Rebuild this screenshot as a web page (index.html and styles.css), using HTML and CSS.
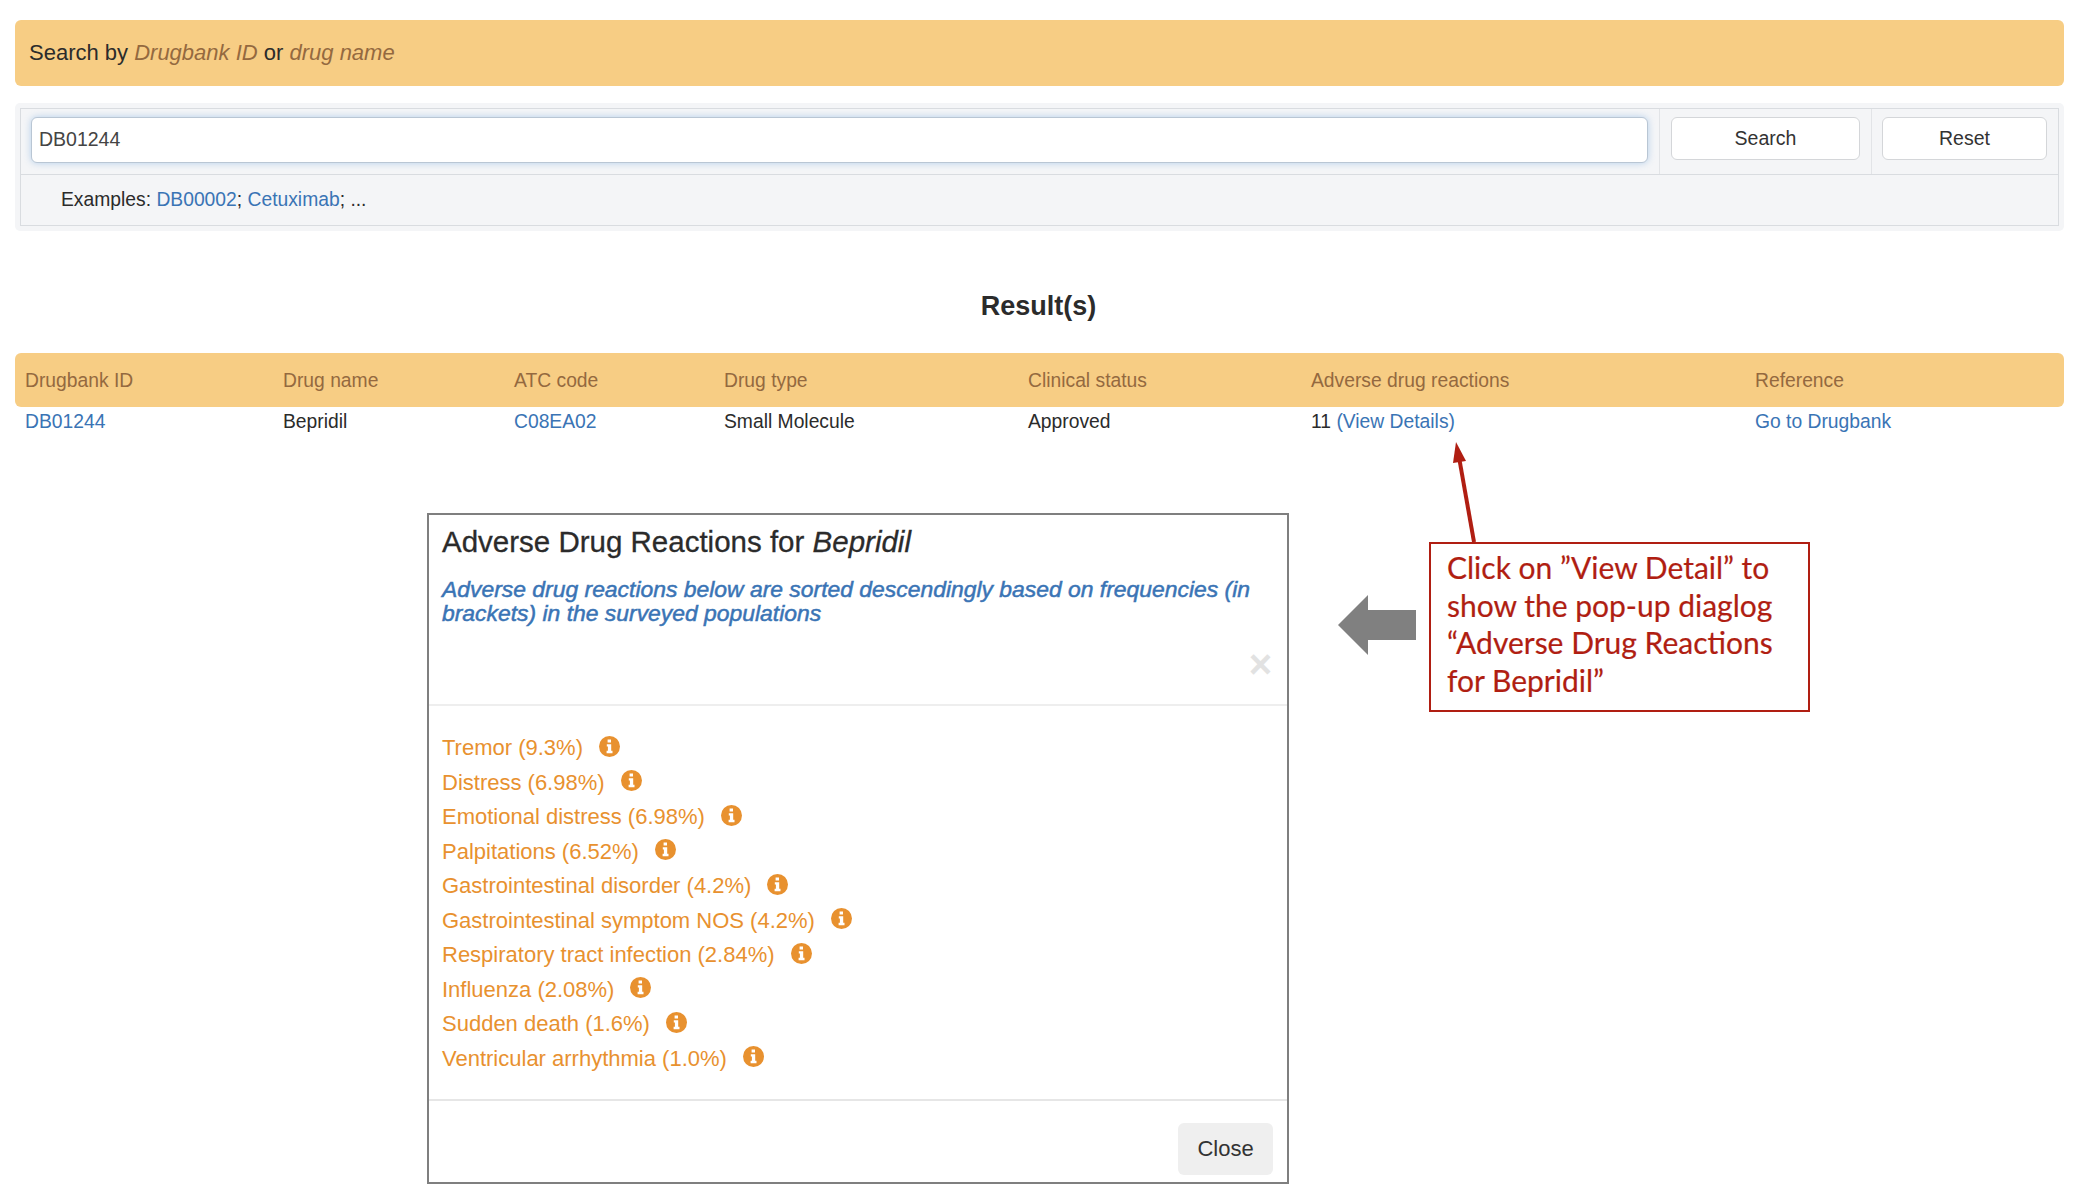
FILE: index.html
```html
<!DOCTYPE html>
<html lang="en">

<head>
  <meta charset="UTF-8" />
  <title>Drug search</title>
  <link rel="stylesheet" href="styles.css">
</head>

<body>

  <!-- Search -->
  <div class="banner">Search by <em>Drugbank ID</em> or <em>drug name</em></div>

  <div class="search-panel">
    <div class="search-inner">
      <div class="search-row">
        <div class="cell cell-input"><input class="search-input" type="text" value="DB01244" /></div>
        <div class="cell cell-search"><button class="btn btn-search">Search</button></div>
        <div class="cell cell-reset"><button class="btn btn-reset">Reset</button></div>
      </div>
      <div class="examples">Examples: <a href="#">DB00002</a>; <a href="#">Cetuximab</a>; ...</div>
    </div>
  </div>

  <h2 class="result-title">Result(s)</h2>

  <!-- Result table -->
  <table class="result-table">
    <thead>
      <tr>
        <th class="col-id">Drugbank ID</th>
        <th class="col-name">Drug name</th>
        <th class="col-atc">ATC code</th>
        <th class="col-type">Drug type</th>
        <th class="col-status">Clinical status</th>
        <th class="col-adr">Adverse drug reactions</th>
        <th>Reference</th>
      </tr>
    </thead>
    <tbody>
      <tr>
        <td><a href="#">DB01244</a></td>
        <td>Bepridil</td>
        <td><a href="#">C08EA02</a></td>
        <td>Small Molecule</td>
        <td>Approved</td>
        <td>11 <a href="#">(View Details)</a></td>
        <td><a href="#">Go to Drugbank</a></td>
      </tr>
    </tbody>
  </table>

  <div class="demo">

    <!-- Modal -->
    <div class="modal">
      <div class="modal-header">
        <h3>Adverse Drug Reactions for <em>Bepridil</em></h3>
        <p class="modal-note">Adverse drug reactions below are sorted descendingly based on frequencies (in brackets) in the surveyed populations</p>
        <span class="modal-x">×</span>
      </div>
      <ul class="adr-list" id="adrList"></ul>
      <div class="modal-footer"><button class="btn-close">Close</button></div>
    </div>

    <svg class="grey-arrow" width="78" height="60" viewBox="0 0 78 60">
      <path d="M0 30 L30 0 V15 H78 V45 H30 V60 Z" fill="#808080" />
    </svg>

    <div class="callout">
      <svg class="red-arrow" width="40" height="100" viewBox="0 0 40 100">
        <path d="M33 100 L18.5 18" stroke="#b01e12" stroke-width="4" fill="none" />
        <path d="M15 0 L25 19 L12 21 Z" fill="#b01e12" />
      </svg>
      Click on ”View Detail” to show the pop-up diaglog “Adverse Drug Reactions for Bepridil”
    </div>
  </div>

  <script>
    const reactions = [
      'Tremor (9.3%)',
      'Distress (6.98%)',
      'Emotional distress (6.98%)',
      'Palpitations (6.52%)',
      'Gastrointestinal disorder (4.2%)',
      'Gastrointestinal symptom NOS (4.2%)',
      'Respiratory tract infection (2.84%)',
      'Influenza (2.08%)',
      'Sudden death (1.6%)',
      'Ventricular arrhythmia (1.0%)'
    ];

    const infoIcon = `
      <svg class="info-icon" width="21" height="21" viewBox="0 0 21 21">
        <circle cx="10.5" cy="10.5" r="10.5" fill="#e8912f" />
        <path d="M8.6 3.6h3.4v3h-3.4z M7.8 8.2h4.4v6.6h1.3v2.4H7.6v-2.4h1.3v-4.2H7.8z" fill="#fff" />
      </svg>`;

    const list = document.getElementById('adrList');
    reactions.forEach(item => {
      const li = document.createElement('li');
      li.innerHTML = `<span>${item}</span>${infoIcon}`;
      list.appendChild(li);
    });
  </script>

</body>

</html>
```

FILE: styles.css
```css
html, body {
  margin: 0;
  padding: 0;
}

body {
  font-family: "Liberation Sans", Arial, sans-serif;
  font-size: 19.5px;
  color: #2b2b2b;
  background: #fff;
  padding: 20px 18px 0 15px;
}

a {
  color: #3a74b5;
  text-decoration: none;
}

.banner {
  height: 66px;
  line-height: 66px;
  padding-left: 14px;
  background: #f7cd84;
  border-radius: 6px;
  font-size: 22px;
}

.banner em {
  color: #94693f;
}

.search-panel {
  margin-top: 17px;
  padding: 5px;
  background: #f4f5f7;
  border-radius: 5px;
}

.search-inner {
  border: 1px solid #d9dce0;
  background: #f4f5f7;
}

.search-row {
  display: flex;
  height: 65px;
  border-bottom: 1px solid #d9dce0;
}

.cell {
  box-sizing: border-box;
  padding-top: 8px;
}

.cell-input {
  flex: 1;
  padding-left: 10px;
  padding-right: 11px;
  border-right: 1px solid #e2e4e7;
}

.cell-search {
  width: 212px;
  padding-left: 11px;
  border-right: 1px solid #e2e4e7;
}

.cell-reset {
  width: 186px;
  padding-left: 10px;
}

.search-input {
  box-sizing: border-box;
  display: block;
  width: 100%;
  height: 46px;
  padding: 0 7px 2px;
  font-family: inherit;
  font-size: 19.5px;
  color: #444;
  background: #fff;
  border: 1px solid #b9c6d4;
  border-radius: 6px;
  box-shadow: 0 0 7px rgba(102, 160, 220, 0.45);
  outline: none;
}

.btn {
  box-sizing: border-box;
  height: 43px;
  font-family: inherit;
  font-size: 19.5px;
  color: #333;
  background: #fff;
  border: 1px solid #d4d6d9;
  border-radius: 6px;
}

.btn-search {
  width: 189px;
}

.btn-reset {
  width: 165px;
}

.examples {
  height: 50px;
  line-height: 50px;
  padding-left: 40px;
  box-sizing: border-box;
  font-size: 19.3px;
}

.result-title {
  margin: 56px 0 0;
  height: 66px;
  font-size: 27px;
  line-height: 38px;
  text-align: center;
  padding-right: 2px;
}

.result-table {
  width: 100%;
  border-collapse: collapse;
  table-layout: fixed;
  font-size: 19.3px;
}

.result-table th {
  box-sizing: border-box;
  height: 54px;
  padding: 2px 0 0 10px;
  background: #f7cd84;
  color: #94693f;
  font-weight: normal;
  text-align: left;
}

.result-table th:first-child {
  border-radius: 6px 0 0 6px;
}

.result-table th:last-child {
  border-radius: 0 6px 6px 0;
}

.result-table td {
  box-sizing: border-box;
  height: 28px;
  padding: 2px 0 0 10px;
}

.col-id { width: 258px; }
.col-name { width: 231px; }
.col-atc { width: 210px; }
.col-type { width: 304px; }
.col-status { width: 283px; }
.col-adr { width: 444px; }

/* modal + annotations */
.demo {
  display: flex;
  align-items: flex-start;
  margin-top: 78px;
  padding-left: 412px;
}

.modal {
  box-sizing: border-box;
  width: 862px;
  height: 671px;
  border: 2px solid #7f7f7f;
  background: #fff;
  display: flex;
  flex-direction: column;
}

.modal-header {
  position: relative;
  height: 191px;
  box-sizing: border-box;
  padding: 10px 13px 0;
  border-bottom: 2px solid #eee;
}

.modal-header h3 {
  margin: 0;
  font-size: 29.5px;
  font-weight: normal;
  line-height: 34px;
  -webkit-text-stroke: 0.3px #2b2b2b;
}

.modal-note {
  margin: 18px 0 0;
  font-size: 22.9px;
  line-height: 24px;
  font-style: italic;
  color: #3a74b5;
  -webkit-text-stroke: 0.5px #3a74b5;
}

.modal-x {
  position: absolute;
  right: 15px;
  top: 129px;
  font-size: 40px;
  line-height: 40px;
  font-weight: bold;
  color: #e2e2e2;
}

.adr-list {
  list-style: none;
  margin: 0;
  padding: 25px 13px 0;
  flex: 1;
  font-size: 22px;
  color: #e8912f;
}

.adr-list li {
  display: flex;
  align-items: center;
  gap: 16px;
  height: 34.5px;
}

.info-icon {
  position: relative;
  top: -2px;
}

.modal-footer {
  height: 83px;
  box-sizing: border-box;
  border-top: 2px solid #e6e6e6;
  padding: 22px 14px 0 0;
  text-align: right;
}

.btn-close {
  width: 95px;
  height: 52px;
  font-family: inherit;
  font-size: 22px;
  color: #333;
  background: #efefef;
  border: none;
  border-radius: 6px;
}

.grey-arrow {
  margin: 82px 0 0 49px;
}

.callout {
  position: relative;
  box-sizing: border-box;
  width: 381px;
  height: 170px;
  margin: 29px 0 0 13px;
  padding: 5px 16px 0 16px;
  border: 2px solid #b01e12;
  color: #b01e12;
  font-family: Lato, sans-serif;
  font-size: 30px;
  line-height: 37.5px;
  -webkit-text-stroke: 0.2px #b01e12;
}

.red-arrow {
  position: absolute;
  left: 10px;
  top: -102px;
}
```
